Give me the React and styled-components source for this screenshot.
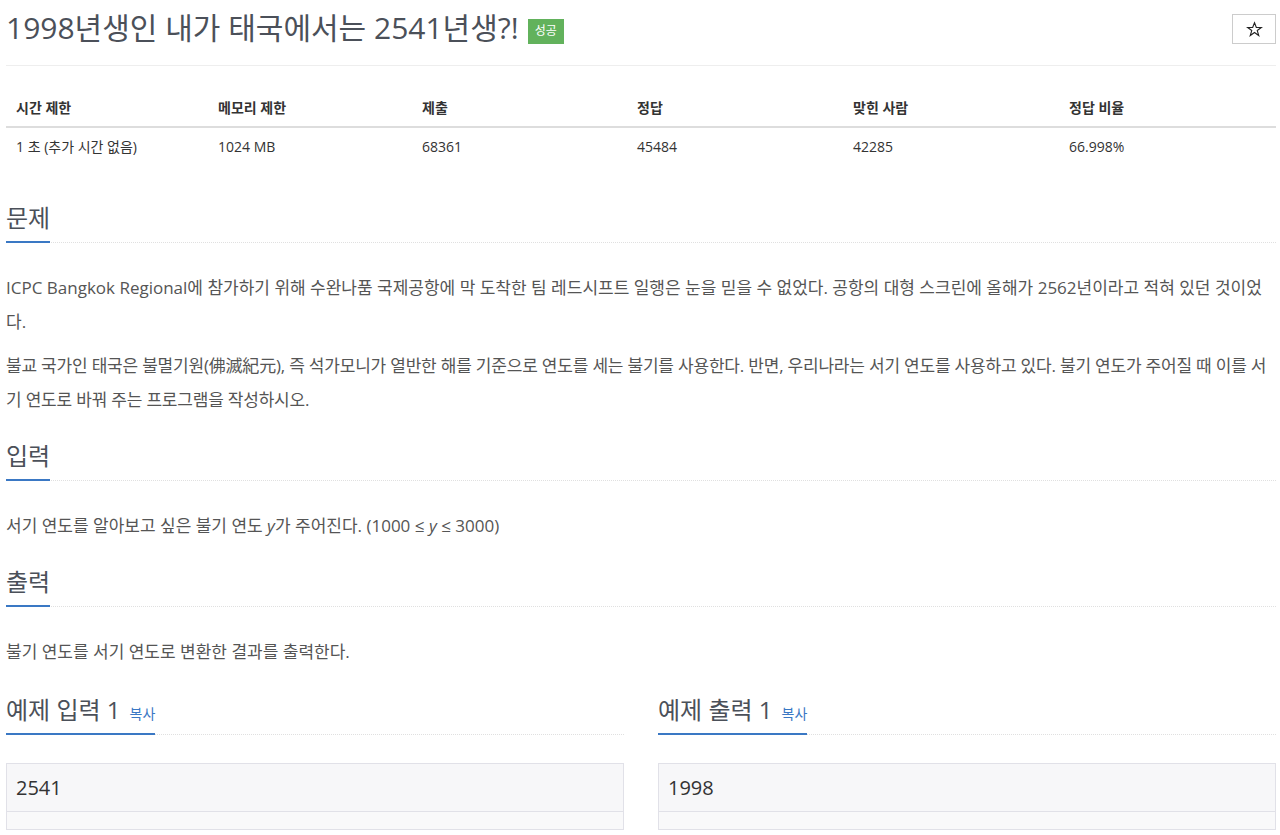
import React from "react";
import styled, { createGlobalStyle } from "styled-components";

const GlobalStyle = createGlobalStyle`
  body {
    margin: 0;
    background: #fff;
    font-family: "Open Sans", "Noto Sans CJK KR", sans-serif;
    color: #555;
  }
`;

const stats = [
  { label: "시간 제한", value: "1 초 (추가 시간 없음)", width: 202 },
  { label: "메모리 제한", value: "1024 MB", width: 204 },
  { label: "제출", value: "68361", width: 215 },
  { label: "정답", value: "45484", width: 216 },
  { label: "맞힌 사람", value: "42285", width: 216 },
  { label: "정답 비율", value: "66.998%", width: 217 },
];

const StarIcon = () => (
  <svg width="17" height="17" viewBox="0 0 24 24" fill="none" stroke="#222" strokeWidth="1.6" strokeLinejoin="miter">
    <polygon points="12,2.5 14.6,9.2 21.6,9.2 15.9,13.5 18,20.5 12,16.3 6,20.5 8.1,13.5 2.4,9.2 9.4,9.2" />
  </svg>
);

const App = () => {
  return (
    <>
      <GlobalStyle />
      <Page>
        {/* 제목 + 즐겨찾기 */}
        <Header>
          <Title>
            1998년생인 내가 태국에서는 2541년생?!
            <Badge>성공</Badge>
          </Title>
          <StarButton type="button" aria-label="즐겨찾기">
            <StarIcon />
          </StarButton>
        </Header>

        <InfoTable>
          <colgroup>
            {stats.map((s) => (
              <col key={s.label} style={{ width: s.width }} />
            ))}
          </colgroup>
          <thead>
            <tr>
              {stats.map((s) => (
                <Th key={s.label}>{s.label}</Th>
              ))}
            </tr>
          </thead>
          <tbody>
            <tr>
              {stats.map((s) => (
                <Td key={s.label}>{s.value}</Td>
              ))}
            </tr>
          </tbody>
        </InfoTable>

        <Section $first>
          <Headline>
            <H2>문제</H2>
          </Headline>
          <Text>
            ICPC Bangkok Regional에 참가하기 위해 수완나품 국제공항에 막 도착한 팀 레드시프트 일행은 눈을 믿을 수
            없었다. 공항의 대형 스크린에 올해가 2562년이라고 적혀 있던 것이었다.
          </Text>
          <Text $tight>
            불교 국가인 태국은 불멸기원(佛滅紀元), 즉 석가모니가 열반한 해를 기준으로 연도를 세는 불기를 사용한다.
            반면, 우리나라는 서기 연도를 사용하고 있다. 불기 연도가 주어질 때 이를 서기 연도로 바꿔 주는 프로그램을
            작성하시오.
          </Text>
        </Section>

        <Section>
          <Headline>
            <H2>입력</H2>
          </Headline>
          <Text>
            서기 연도를 알아보고 싶은 불기 연도 <Var>y</Var>가 주어진다. (1000 ≤ <Var>y</Var> ≤ 3000)
          </Text>
        </Section>

        <Section>
          <Headline>
            <H2>출력</H2>
          </Headline>
          <Text>불기 연도를 서기 연도로 변환한 결과를 출력한다.</Text>
        </Section>

        <Samples>
          <Section>
            <Headline>
              <H2>
                예제 입력 1<CopyLink>복사</CopyLink>
              </H2>
            </Headline>
            <SampleBox>
              <SampleData>2541</SampleData>
              <SampleFoot />
            </SampleBox>
          </Section>
          <Section>
            <Headline>
              <H2>
                예제 출력 1<CopyLink>복사</CopyLink>
              </H2>
            </Headline>
            <SampleBox>
              <SampleData>1998</SampleData>
              <SampleFoot />
            </SampleBox>
          </Section>
        </Samples>
      </Page>
    </>
  );
};

export default App;

const Page = styled.div`
  padding: 0 4px 0 6px;
`;

const Header = styled.div`
  display: flex;
  justify-content: space-between;
  align-items: flex-start;
  padding-top: 11px;
  height: 54px;
  border-bottom: 1px solid #eee;
`;

const Title = styled.h1`
  margin: 0;
  font-size: 30px;
  font-weight: 400;
  line-height: 34px;
  color: #4b5059;
  display: flex;
  align-items: center;
  gap: 9px;
`;

const Badge = styled.span`
  display: inline-flex;
  align-items: center;
  justify-content: center;
  width: 36px;
  height: 25px;
  margin-top: 6px;
  background: #62b25c;
  color: #fff;
  font-size: 12px;
  font-weight: 400;
`;

const StarButton = styled.button`
  width: 44px;
  height: 30px;
  margin-top: 3px;
  border: 1px solid #ccc;
  background: #fff;
  padding: 0;
  display: flex;
  align-items: center;
  justify-content: center;
  cursor: pointer;
`;

const InfoTable = styled.table`
  width: 100%;
  margin-top: 23px;
  border-collapse: collapse;
  table-layout: fixed;
  font-size: 14px;
  color: #333;
`;

const Th = styled.th`
  text-align: left;
  font-weight: 700;
  padding: 9px 10px 8px;
  line-height: 20px;
  border-bottom: 2px solid #ddd;
`;

const Td = styled.td`
  padding: 9px 10px;
  line-height: 20px;
`;

const Section = styled.section`
  margin-top: ${(p) => (p.$first ? "39px" : "26px")};
`;

const Headline = styled.div`
  display: flex;
  border-bottom: 1px dotted #e0e0e0;
  margin-bottom: 28px;
`;

const H2 = styled.h2`
  display: flex;
  align-items: baseline;
  gap: 9px;
  margin: 0 0 -1px;
  font-size: 24px;
  font-weight: 400;
  line-height: 26px;
  color: #4b5059;
  padding-bottom: 10px;
  border-bottom: 2px solid #3a78c4;
`;

const CopyLink = styled.span`
  font-size: 14px;
  line-height: 14px;
  color: #3a78c4;
`;

const Text = styled.p`
  margin: 0 0 10px;
  font-size: 17px;
  line-height: 34px;
  letter-spacing: ${(p) => (p.$tight ? "-0.2px" : "0")};
  color: #555;
`;

const Var = styled.i`
  font-style: italic;
`;

const Samples = styled.div`
  display: grid;
  grid-template-columns: 1fr 1fr;
  column-gap: 34px;
  & > section {
    margin-top: 18px;
  }
`;

const SampleBox = styled.div`
  border: 1px solid #e1e1e8;
  background: #f7f7f9;
`;

const SampleData = styled.pre`
  margin: 0;
  height: 47px;
  padding: 0 9px;
  display: flex;
  align-items: center;
  font-family: "Open Sans", sans-serif;
  font-size: 20px;
  color: #333;
  border-bottom: 1px solid #e1e1e8;
`;

const SampleFoot = styled.div`
  height: 17px;
  background: #f9f9fa;
`;
